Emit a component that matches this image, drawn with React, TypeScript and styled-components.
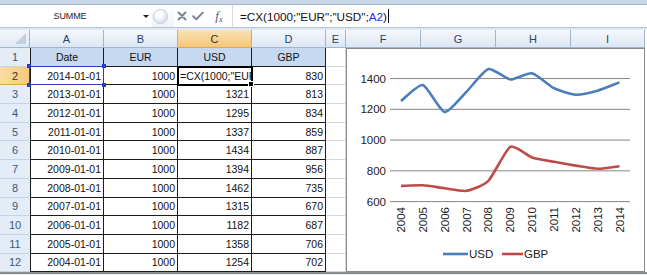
import styled, { createGlobalStyle } from 'styled-components';

const GlobalStyle = createGlobalStyle`
  html, body {
    margin: 0;
    padding: 0;
    background: #ffffff;
    overflow: hidden;
  }
  body {
    font-family: "Liberation Sans", Arial, sans-serif;
  }
`;

const Page = styled.div`
  width: 647px;
  height: 275px;
  background: #dfe7f1;
  overflow: hidden;
`;

const TopStrip = styled.div`
  height: 4px;
  background: #c9d6e6;
  border-bottom: 1px solid #a3b6cd;
`;

const FormulaBar = styled.div`
  box-sizing: border-box;
  height: 23px;
  display: flex;
  align-items: stretch;
  background: #ffffff;
  border-bottom: 1px solid #b4c4d8;
`;

const NameBox = styled.div`
  width: 140px;
  display: flex;
  align-items: center;
  justify-content: center;
  font-size: 9px;
  color: #222;
  letter-spacing: -0.1px;
`;

const DropArrow = styled.div`
  width: 12px;
  display: flex;
  align-items: center;
  justify-content: center;
  &::after {
    content: '';
    border-left: 3px solid transparent;
    border-right: 3px solid transparent;
    border-top: 3px solid #222;
  }
`;

const Grip = styled.div`
  width: 22px;
  display: flex;
  align-items: center;
  background: linear-gradient(#ffffff, #eef2f7);
  &::before {
    content: '';
    width: 13px;
    height: 13px;
    margin-left: 1px;
    border-radius: 50%;
    border: 1px solid #c3cddb;
    background: radial-gradient(circle at 40% 35%, #ffffff 0 25%, #d9e0ea 70%);
  }
`;

const Tools = styled.div`
  display: flex;
  align-items: center;
  width: 58px;
`;

const ToolSlot = styled.div<{ $w: number }>`
  width: ${(p) => p.$w}px;
  display: flex;
  align-items: center;
  justify-content: center;
  color: #7b8594;
`;

const Fx = styled.span`
  font-family: "Liberation Serif", "Times New Roman", serif;
  font-style: italic;
  font-size: 13px;
  color: #555d68;
  & small {
    font-size: 9px;
    position: relative;
    top: 2px;
  }
`;

const FormulaInput = styled.div`
  flex: 1;
  display: flex;
  align-items: center;
  padding-left: 7px;
  border-left: 1px solid #d3dbe6;
  font-size: 11.7px;
  color: #111;
  white-space: nowrap;
`;

const Ref = styled.span`
  color: #2733d6;
`;

const Caret = styled.span`
  display: inline-block;
  width: 1px;
  height: 14px;
  margin-left: 1px;
  background: #000;
`;

const Gap = styled.div`
  height: 2px;
`;

const SheetWrap = styled.div`
  position: relative;
`;

const Sheet = styled.div`
  display: grid;
  grid-template-columns: 30px 74px 74px 74px 74px 20px 75px 75px 75px 74px;
  grid-template-rows: 18px repeat(12, 18.7px);
  background: #ffffff;
`;

const Corner = styled.div`
  position: relative;
  box-sizing: border-box;
  background: linear-gradient(#f4f7fb, #dfe8f3);
  border-right: 1px solid #9eb6ce;
  border-bottom: 1px solid #9eb6ce;
  &::after {
    content: '';
    position: absolute;
    right: 3px;
    bottom: 3px;
    border-left: 11px solid transparent;
    border-bottom: 11px solid #c2cfdf;
  }
`;

const ColHead = styled.div<{ $sel?: boolean }>`
  box-sizing: border-box;
  display: flex;
  align-items: center;
  justify-content: center;
  font-size: 11px;
  color: ${(p) => (p.$sel ? '#3a3020' : '#2b4364')};
  background: ${(p) =>
    p.$sel ? 'linear-gradient(#fae3b4, #f4c679)' : 'linear-gradient(#f6f9fd, #dce6f3)'};
  border-right: 1px solid ${(p) => (p.$sel ? '#e3a64d' : '#9eb6ce')};
  border-bottom: 1px solid ${(p) => (p.$sel ? '#e3a64d' : '#9eb6ce')};
`;

const RowHead = styled.div<{ $sel?: boolean }>`
  box-sizing: border-box;
  display: flex;
  align-items: center;
  justify-content: center;
  font-size: 11px;
  color: ${(p) => (p.$sel ? '#3a3020' : '#3e5878')};
  background: ${(p) => (p.$sel ? 'linear-gradient(90deg, #f9dda6, #f5c87c)' : '#e4ecf7')};
  border-bottom: 1px solid ${(p) => (p.$sel ? '#e3a64d' : '#c5d3e4')};
`;

const Cell = styled.div<{ $table?: boolean; $head?: boolean; $lead?: boolean; $edit?: boolean }>`
  position: relative;
  box-sizing: border-box;
  display: flex;
  align-items: center;
  min-width: 0;
  font-size: 10.5px;
  color: #111;
  background: ${(p) => (p.$head ? '#c6d9f1' : '#ffffff')};
  border-right: 1px solid ${(p) => (p.$table ? '#1c1c1c' : '#d0d7e5')};
  border-bottom: 1px solid ${(p) => (p.$table ? '#1c1c1c' : '#d0d7e5')};
  ${(p) => (p.$lead ? 'border-left: 1px solid #1c1c1c;' : '')}
  ${(p) => (p.$edit ? 'outline: 2px solid #000; outline-offset: -1px; z-index: 1;' : '')}
`;

const CellText = styled.span<{ $align: 'left' | 'center' | 'right' }>`
  flex: 1;
  min-width: 0;
  overflow: hidden;
  white-space: nowrap;
  padding: 0 2px;
  text-align: ${(p) => p.$align};
`;

const Ring = styled.div`
  position: absolute;
  inset: -1px -1px -1px -2px;
  border: 1.5px solid #2a3bd0;
  z-index: 2;
  pointer-events: none;
`;

const Handle = styled.span<{ $x: 'left' | 'right'; $y: 'top' | 'bottom' }>`
  position: absolute;
  ${(p) => p.$x}: -3px;
  ${(p) => p.$y}: -3px;
  width: 4px;
  height: 4px;
  background: #2a3bd0;
`;

const FillDot = styled.span`
  position: absolute;
  right: -3px;
  bottom: -3px;
  width: 4px;
  height: 4px;
  background: #000;
  border: 1px solid #fff;
  z-index: 3;
`;

const ChartBox = styled.div`
  position: absolute;
  left: 346px;
  top: 18px;
  width: 299px;
  height: 224px;
  box-sizing: border-box;
  border: 1px solid #8a8a8a;
  background: #ffffff;
  z-index: 4;
`;

const BottomBar = styled.div`
  height: 2px;
  background: #8d8d8d;
`;

const COLS = ['A', 'B', 'C', 'D', 'E', 'F', 'G', 'H', 'I'];

const ROWS = [
  ['2014-01-01', '1000', null, '830'],
  ['2013-01-01', '1000', '1321', '813'],
  ['2012-01-01', '1000', '1295', '834'],
  ['2011-01-01', '1000', '1337', '859'],
  ['2010-01-01', '1000', '1434', '887'],
  ['2009-01-01', '1000', '1394', '956'],
  ['2008-01-01', '1000', '1462', '735'],
  ['2007-01-01', '1000', '1315', '670'],
  ['2006-01-01', '1000', '1182', '687'],
  ['2005-01-01', '1000', '1358', '706'],
  ['2004-01-01', '1000', '1254', '702'],
];

const YEARS = [2004, 2005, 2006, 2007, 2008, 2009, 2010, 2011, 2012, 2013, 2014];
const USD = [1254, 1358, 1182, 1315, 1462, 1394, 1434, 1337, 1295, 1321, 1375];
const GBP = [702, 706, 687, 670, 735, 956, 887, 859, 834, 813, 830];

const X0 = 401;
const DX = 21.85;
const yOf = (v: number) => 201.6 - (v - 600) * 0.1538;

// catmull-rom -> bezier with low tension, close to excel's smoothed line
function smoothPath(vals: number[]) {
  const k = 10;
  const pts = vals.map((v, i) => [X0 + i * DX, yOf(v)]);
  const f = (n: number) => n.toFixed(1);
  let d = `M${f(pts[0][0])},${f(pts[0][1])}`;
  for (let i = 0; i < pts.length - 1; i++) {
    const p0 = pts[i - 1] ?? pts[i];
    const p1 = pts[i];
    const p2 = pts[i + 1];
    const p3 = pts[i + 2] ?? p2;
    const c1x = p1[0] + (p2[0] - p0[0]) / k;
    const c1y = p1[1] + (p2[1] - p0[1]) / k;
    const c2x = p2[0] - (p3[0] - p1[0]) / k;
    const c2y = p2[1] - (p3[1] - p1[1]) / k;
    d += ` C${f(c1x)},${f(c1y)} ${f(c2x)},${f(c2y)} ${f(p2[0])},${f(p2[1])}`;
  }
  return d;
}

function Chart() {
  const ticks = [600, 800, 1000, 1200, 1400];
  return (
    <ChartBox>
      <svg width="297" height="222" viewBox="347 49 297 222" fontFamily="Liberation Sans, Arial, sans-serif" fontSize="11.5">
        {ticks.map((t) => (
          <g key={t}>
            <line x1="390" x2="630" y1={yOf(t)} y2={yOf(t)} stroke="#868686" strokeWidth="1" />
            <text x="386" y={yOf(t) + 4} textAnchor="end" fill="#222">
              {t}
            </text>
          </g>
        ))}
        {YEARS.map((y, i) => (
          <text
            key={y}
            transform={`translate(${X0 + i * DX + 4},207) rotate(-90)`}
            textAnchor="end"
            fill="#222"
          >
            {y}
          </text>
        ))}
        <path d={smoothPath(USD)} fill="none" stroke="#4a7ebb" strokeWidth="2.6" strokeLinejoin="round" />
        <path d={smoothPath(GBP)} fill="none" stroke="#be4b48" strokeWidth="2.6" strokeLinejoin="round" />
        <line x1="443" x2="468" y1="254" y2="254" stroke="#4a7ebb" strokeWidth="2.6" />
        <text x="469" y="258" fill="#222">USD</text>
        <line x1="502" x2="523" y1="254" y2="254" stroke="#be4b48" strokeWidth="2.6" />
        <text x="524" y="258" fill="#222">GBP</text>
      </svg>
    </ChartBox>
  );
}

function CancelIcon() {
  return (
    <svg width="10" height="10" viewBox="0 0 10 10">
      <path d="M1.5 1.5 L8.5 8.5 M8.5 1.5 L1.5 8.5" stroke="currentColor" strokeWidth="2" strokeLinecap="round" />
    </svg>
  );
}

function EnterIcon() {
  return (
    <svg width="12" height="10" viewBox="0 0 12 10">
      <path d="M1.2 5.2 L4.3 8.2 L10.8 1.6" fill="none" stroke="currentColor" strokeWidth="2" strokeLinecap="round" strokeLinejoin="round" />
    </svg>
  );
}

export default function App() {
  return (
    <Page>
      <GlobalStyle />
      <TopStrip />
      <FormulaBar>
        <NameBox>SUMME</NameBox>
        <DropArrow />
        <Grip />
        <Tools>
          <ToolSlot $w={16}>
            <CancelIcon />
          </ToolSlot>
          <ToolSlot $w={16}>
            <EnterIcon />
          </ToolSlot>
          <ToolSlot $w={26}>
            <Fx>
              f<small>x</small>
            </Fx>
          </ToolSlot>
        </Tools>
        <FormulaInput>
          =CX(1000;"EUR";"USD";<Ref>A2</Ref>)
          <Caret />
        </FormulaInput>
      </FormulaBar>
      <Gap />
      <SheetWrap>
        <Sheet>
          <Corner />
          {COLS.map((c) => (
            <ColHead key={c} $sel={c === 'C'}>
              {c}
            </ColHead>
          ))}

          <RowHead>1</RowHead>
          {['Date', 'EUR', 'USD', 'GBP'].map((h, i) => (
            <Cell key={h} $table $head $lead={i === 0}>
              <CellText $align="center">{h}</CellText>
            </Cell>
          ))}
          {COLS.slice(4).map((c) => (
            <Cell key={c} />
          ))}

          {ROWS.map((row, r) => {
            const n = r + 2;
            return [
              <RowHead key={`h${n}`} $sel={n === 2}>
                {n}
              </RowHead>,
              ...row.map((v, i) => {
                if (n === 2 && i === 0) {
                  return (
                    <Cell key={`${n}-${i}`} $table $lead>
                      <CellText $align="right">{v}</CellText>
                      <Ring>
                        <Handle $x="left" $y="top" />
                        <Handle $x="right" $y="top" />
                        <Handle $x="left" $y="bottom" />
                        <Handle $x="right" $y="bottom" />
                      </Ring>
                    </Cell>
                  );
                }
                if (v === null) {
                  return (
                    <Cell key={`${n}-${i}`} $table $edit>
                      <CellText $align="left">=CX(1000;"EUR";"USD";A2)</CellText>
                      <FillDot />
                    </Cell>
                  );
                }
                return (
                  <Cell key={`${n}-${i}`} $table $lead={i === 0}>
                    <CellText $align="right">{v}</CellText>
                  </Cell>
                );
              }),
              ...COLS.slice(4).map((c) => <Cell key={`${n}${c}`} />),
            ];
          })}
        </Sheet>
        <Chart />
      </SheetWrap>
      <BottomBar />
    </Page>
  );
}
